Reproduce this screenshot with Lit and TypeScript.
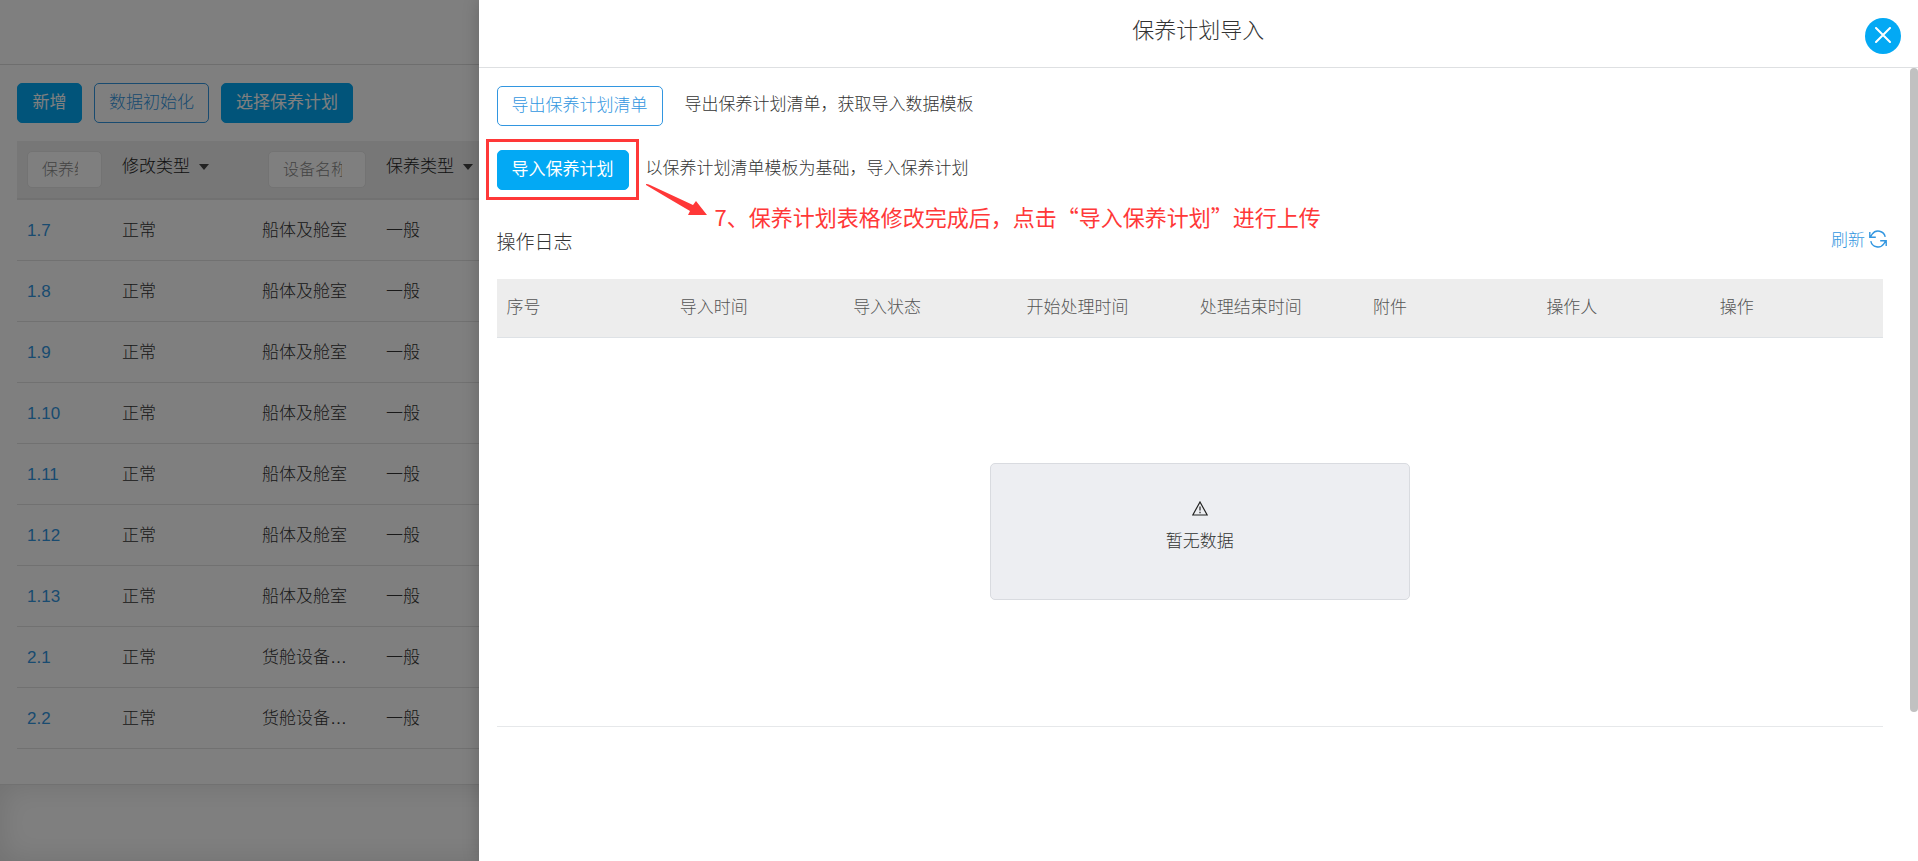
import { LitElement, html, css } from "lit";
import { customElement } from "lit/decorators.js";

interface Item {
  code: string;
  state: string;
  device: string;
  type: string;
}

const HULL = "船体及舱室";
const CARGO = "货舱设备…";

const ITEMS: Item[] = [
  ["1.7", HULL],
  ["1.8", HULL],
  ["1.9", HULL],
  ["1.10", HULL],
  ["1.11", HULL],
  ["1.12", HULL],
  ["1.13", HULL],
  ["2.1", CARGO],
  ["2.2", CARGO],
].map(([code, device]) => ({ code, device, state: "正常", type: "一般" }));

const LOG_COLUMNS = [
  "序号",
  "导入时间",
  "导入状态",
  "开始处理时间",
  "处理结束时间",
  "附件",
  "操作人",
  "操作",
];

const base = css`
  * {
    box-sizing: border-box;
  }
  button,
  input,
  select {
    font: inherit;
    color: inherit;
    margin: 0;
  }
  a {
    color: #3296e0;
    text-decoration: none;
  }
  table {
    width: 100%;
    border-collapse: collapse;
    table-layout: fixed;
  }
  th {
    font-weight: 300;
    text-align: left;
    color: #555;
  }
  .btn {
    height: 40px;
    min-width: 65px;
    padding: 0 14px;
    border: 1px solid #3296e0;
    border-radius: 5px;
    background: #fff;
    color: #3296e0;
    line-height: 24px;
    font-weight: 300;
    white-space: nowrap;
    cursor: pointer;
  }
  .primary {
    background: #03a9f4;
    border-color: #03a9f4;
    color: #fff;
    font-weight: 400;
  }
`;

@customElement("plan-page")
export class PlanPage extends LitElement {
  static styles = [
    base,
    css`
      :host {
        display: flex;
        flex-direction: column;
        min-height: 100vh;
        background: #fff;
      }
      .bar {
        height: 65px;
        border-bottom: 1px solid #dcdcdc;
      }
      .body {
        padding: 18px 17px 35px;
        border-bottom: 1px solid #e2e2e2;
      }
      .actions {
        display: flex;
        gap: 12px;
        margin-bottom: 18px;
      }
      .c1 {
        width: 95px;
      }
      .c2 {
        width: 140px;
      }
      .c3 {
        width: 124px;
      }
      th {
        height: 58px;
        padding: 0 0 0 10px;
        background: #eee;
        border-bottom: 2px solid #e2e2e2;
      }
      th.device {
        padding-left: 16px;
      }
      td {
        height: 61px;
        padding: 2px 0 0 10px;
        border-bottom: 1px solid #e2e2e2;
        white-space: nowrap;
      }
      .code a {
        font-weight: 400;
      }
      input {
        display: block;
        width: 75px;
        height: 37px;
        padding: 0 23px 0 14px;
        border: 1px solid #e6e6e6;
        border-radius: 5px;
        background: #fff;
        font-size: 16px;
      }
      .device input {
        width: 98px;
      }
      input::placeholder {
        color: #888;
        opacity: 1;
      }
      .pick {
        display: inline-flex;
        align-items: center;
        gap: 9px;
        padding-bottom: 6px;
      }
      select {
        appearance: none;
        border: 0;
        padding: 0;
        background: none;
        line-height: 24px;
        font-weight: 300;
        color: #222;
      }
      .rest {
        flex: 1;
        box-shadow: inset 0 0 30px rgba(0, 0, 0, 0.12);
      }
    `,
  ];

  private pick(label: string) {
    return html`<span class="pick">
      <select aria-label=${label}>
        <option>${label}</option>
      </select>
      <svg width="10" height="6" viewBox="0 0 10 6"><path d="M0 0h10L5 6z" fill="#444" /></svg>
    </span>`;
  }

  render() {
    return html`
      <div class="bar"></div>
      <div class="body">
        <div class="actions">
          <button class="btn primary">新增</button>
          <button class="btn">数据初始化</button>
          <button class="btn primary">选择保养计划</button>
        </div>
        <table>
          <colgroup>
            <col class="c1" />
            <col class="c2" />
            <col class="c3" />
            <col />
          </colgroup>
          <thead>
            <tr>
              <th><input placeholder="保养编号" aria-label="保养编号" /></th>
              <th>${this.pick("修改类型")}</th>
              <th class="device"><input placeholder="设备名称" aria-label="设备名称" /></th>
              <th>${this.pick("保养类型")}</th>
            </tr>
          </thead>
          <tbody>
            ${ITEMS.map(
              (i) => html`<tr>
                <td class="code"><a href="#">${i.code}</a></td>
                <td>${i.state}</td>
                <td>${i.device}</td>
                <td>${i.type}</td>
              </tr>`
            )}
          </tbody>
        </table>
      </div>
      <div class="rest"></div>
    `;
  }
}

@customElement("import-drawer")
export class ImportDrawer extends LitElement {
  static styles = [
    base,
    css`
      :host {
        display: flex;
        flex-direction: column;
        background: #fff;
      }
      header {
        position: relative;
        height: 68px;
        padding-top: 15px;
        border-bottom: 1px solid #dee0e2;
        text-align: center;
      }
      h1 {
        margin: 0;
        font-size: 22px;
        line-height: 32px;
        font-weight: 300;
      }
      .close {
        position: absolute;
        top: 18px;
        right: 17px;
        width: 36px;
        height: 36px;
        padding: 0 0 2px;
        border: 0;
        border-radius: 50%;
        background: #03a9f4;
        display: grid;
        place-items: center;
        cursor: pointer;
      }
      .scroll {
        position: relative;
        flex: 1;
        padding: 18px 35px 0 18px;
      }
      .thumb {
        position: absolute;
        top: 0;
        right: 0;
        width: 8px;
        height: 81.2%;
        border-radius: 4px;
        background: #c1c1c1;
      }
      .row {
        display: flex;
        align-items: center;
        gap: 22px;
        margin-bottom: 24px;
      }
      .row.second {
        gap: 17px;
        margin-bottom: 37px;
      }
      .row p {
        margin: 0;
        line-height: 24px;
        padding-bottom: 2px;
      }
      .target {
        position: relative;
      }
      .frame {
        position: absolute;
        inset: -11px -10px -10px -11px;
        border: 3px solid #ff3838;
        pointer-events: none;
      }
      .note {
        position: absolute;
        left: 149px;
        top: 34px;
        display: flex;
        gap: 7px;
        color: #ff3838;
        font: 400 22px/32px "Noto Sans CJK SC", sans-serif;
        white-space: nowrap;
        pointer-events: none;
      }
      .note span {
        padding-top: 16px;
      }
      .log {
        display: flex;
        justify-content: space-between;
        align-items: center;
        margin-right: -4px;
        margin-bottom: 20px;
      }
      h2 {
        margin: 0;
        font-size: 19px;
        line-height: 32px;
        font-weight: 300;
      }
      .refresh {
        display: flex;
        align-items: center;
        gap: 4px;
        line-height: 24px;
        padding-bottom: 4px;
      }
      .refresh svg {
        margin-bottom: 4px;
      }
      th {
        height: 58px;
        padding: 1px 10px 0;
        background: #ededed;
        border-bottom: 1px solid #dee2e6;
      }
      td {
        padding: 125px 0 126px 20px;
        border-bottom: 1px solid #e6e8ea;
      }
      .empty {
        display: flex;
        flex-direction: column;
        align-items: center;
        gap: 12px;
        width: 420px;
        margin: 0 auto;
        padding: 37px 0 43px;
        border: 1px solid #d9dbe0;
        border-radius: 5px;
        background: #edeef2;
        line-height: 28px;
      }
    `,
  ];

  render() {
    return html`
      <header>
        <h1>保养计划导入</h1>
        <button class="close" aria-label="关闭">
          <svg width="16" height="16" viewBox="0 0 16 16" fill="none" stroke="#fff" stroke-width="2" stroke-linecap="round">
            <path d="M1 1l14 14M15 1L1 15" />
          </svg>
        </button>
      </header>
      <div class="scroll">
        <div class="row">
          <button class="btn">导出保养计划清单</button>
          <p>导出保养计划清单，获取导入数据模板</p>
        </div>
        <div class="row second">
          <div class="target">
            <button class="btn primary">导入保养计划</button>
            <div class="frame"></div>
            <div class="note">
              <svg width="62" height="34" viewBox="0 0 62 34">
                <path d="M0 0Q2 0 4 1L47 21L50 17L61 31L42 31L44 27Q20 13 0 1z" fill="#ff3838" />
              </svg>
              <span>7、保养计划表格修改完成后，点击“导入保养计划”进行上传</span>
            </div>
          </div>
          <p>以保养计划清单模板为基础，导入保养计划</p>
        </div>
        <div class="log">
          <h2>操作日志</h2>
          <a class="refresh" href="#">
            刷新
            <svg width="18" height="18" viewBox="0 0 18 18" fill="none" stroke="#3296e0" stroke-width="1.4">
              <path d="M.8 2v5.200h6M1.400 6.800L3.200 4.200A7.200 7.200 0 0 1 16.200 6.800" />
              <path d="M17.200 16v-5.200h-6M16.600 11.200L14.800 13.800A7.200 7.200 0 0 1 1.800 11.200" />
            </svg>
          </a>
        </div>
        <table>
          <thead>
            <tr>
              ${LOG_COLUMNS.map((c) => html`<th>${c}</th>`)}
            </tr>
          </thead>
          <tbody>
            <tr>
              <td colspan="8">
                <div class="empty">
                  <svg width="16" height="15" viewBox="0 0 16 15" fill="none" stroke="#222" stroke-width="1.2">
                    <path d="M8 1L15.200 14H.8z" />
                    <path d="M8 5.500v4M8 10.800v1.500" />
                  </svg>
                  暂无数据
                </div>
              </td>
            </tr>
          </tbody>
        </table>
        <div class="thumb"></div>
      </div>
    `;
  }
}

@customElement("app-root")
export class AppRoot extends LitElement {
  static styles = css`
    :host {
      display: block;
      position: relative;
      min-height: 100vh;
      overflow: hidden;
      font: 300 17px/24px "Liberation Sans", "Noto Sans CJK SC", sans-serif;
      color: #333;
    }
    .mask {
      position: absolute;
      inset: 0;
      background: rgba(0, 0, 0, 0.5);
    }
    .drawer {
      position: absolute;
      top: 0;
      right: 0;
      bottom: 0;
      width: calc(75% + 1px);
      box-shadow: 0 0 16px rgba(0, 0, 0, 0.2);
    }
  `;

  render() {
    return html`
      <plan-page></plan-page>
      <div class="mask"></div>
      <import-drawer class="drawer"></import-drawer>
    `;
  }
}
